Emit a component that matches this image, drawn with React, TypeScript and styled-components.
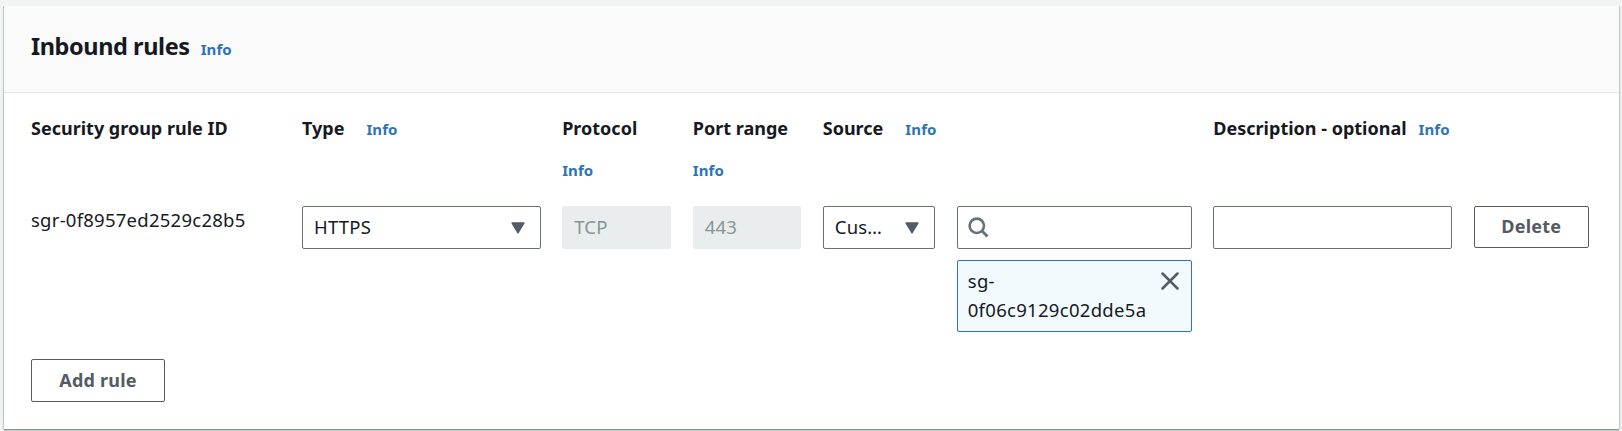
import React from "react";
import styled, { createGlobalStyle } from "styled-components";

const GlobalStyle = createGlobalStyle`
  * { box-sizing: border-box; }
  body {
    margin: 0;
    background: #f2f3f3;
    color: #16191f;
    font-family: "Noto Sans", "Open Sans", sans-serif;
    font-size: 18.5px;
    line-height: 29px;
  }
`;

const Page = styled.main`
  height: 431px;
  padding: 6px 3px 2px 4px;
  background: #f2f3f3;
`;

const Panel = styled.section`
  height: 423px;
  background: #fff;
  box-shadow: 0 1px 0 0 #879093, 0 2px 0 0 #c6cbcc, 1px 0 0 0 #c3c9c9, -1px 0 0 0 #c3c9c9,
    2px 1px 0 0 #e6e9e9, -2px 1px 0 0 #e9ebeb;
`;

const PanelHeader = styled.header`
  display: flex;
  align-items: baseline;
  gap: 11px;
  height: 87px;
  padding: 25px 27px 0;
  background: #fafafa;
  border-bottom: 1px solid #e6e9e9;
`;

const Title = styled.h2`
  margin: 0;
  font-size: 23.5px;
  line-height: 30px;
  font-weight: 700;
  letter-spacing: -0.42px;
`;

const InfoLink = styled.a`
  color: #2e73b8;
  font-size: 15px;
  font-weight: 700;
  letter-spacing: 0.1px;
`;

const PanelBody = styled.div`
  padding: 21px 27px 0;
`;

const columns = `
  display: grid;
  grid-template-columns: 249.4px 238.6px 109px 108.4px 112.4px 235px 238.8px 115px;
  column-gap: 21.6px;
`;

const HeadRow = styled.div`
  ${columns}
  height: 92px;
`;

const HeadCell = styled.div<{ $gap?: number; $stacked?: boolean; $span?: number }>`
  display: flex;
  flex-direction: ${(p) => (p.$stacked ? "column" : "row")};
  align-items: baseline;
  gap: ${(p) => (p.$stacked ? 13 : p.$gap ?? 0)}px;
  grid-column: span ${(p) => p.$span ?? 1};
  white-space: nowrap;
`;

const Label = styled.span`
  font-size: 18px;
  font-weight: 700;
`;

const RuleRow = styled.div`
  ${columns}
  align-items: start;
  height: 153px;
`;

const RuleId = styled.span`
  line-height: 27px;
  letter-spacing: 0.25px;
`;

const Field = styled.div<{ $disabled?: boolean }>`
  display: flex;
  align-items: center;
  justify-content: space-between;
  height: 43px;
  padding: 0 15px 0 11px;
  border: 1px solid ${(p) => (p.$disabled ? "#eaeded" : "#687078")};
  border-radius: 2px;
  background: ${(p) => (p.$disabled ? "#eaeded" : "#fff")};
  color: ${(p) => (p.$disabled ? "#879596" : "#16191f")};
  letter-spacing: 0.2px;
`;

const FieldText = styled.span`
  padding-bottom: 2px;
`;

const SearchField = styled(Field)`
  padding-left: 10px;
`;

const SourceStack = styled.div`
  display: flex;
  flex-direction: column;
  gap: 11px;
`;

const Token = styled.div`
  display: flex;
  justify-content: space-between;
  height: 72px;
  padding: 5px 12px 0 10px;
  border: 1px solid #2e73b8;
  border-radius: 2px;
  background: #f2fafe;
  line-height: 29px;
  letter-spacing: 0.3px;
`;

const CloseIcon = styled.svg`
  flex: none;
  margin-top: 6px;
`;

const Button = styled.button<{ $width: number; $height: number }>`
  width: ${(p) => p.$width}px;
  height: ${(p) => p.$height}px;
  padding: 0 0 1px;
  border: 1px solid #545b64;
  border-radius: 2px;
  background: #fff;
  color: #545b64;
  font: 700 18px/29px "Noto Sans", "Open Sans", sans-serif;
  letter-spacing: 0.2px;
`;

const Caret = () => (
  <svg width="14" height="12" viewBox="0 0 14 12">
    <path d="M1 1h12L7 11z" fill="#545b64" stroke="#545b64" strokeWidth="1.4" strokeLinejoin="round" />
  </svg>
);

const Search = () => (
  <svg width="21" height="21" viewBox="0 0 21 21" fill="none" stroke="#687078">
    <circle cx="8.8" cy="8.8" r="7.2" strokeWidth="2.6" />
    <path d="M13.8 13.8l5.7 5.7" strokeWidth="2.9" />
  </svg>
);

export default function App() {
  return (
    <Page>
      <GlobalStyle />
      <Panel>
        <PanelHeader>
          <Title>Inbound rules</Title>
          <InfoLink>Info</InfoLink>
        </PanelHeader>
        <PanelBody>
          <HeadRow>
            <HeadCell><Label>Security group rule ID</Label></HeadCell>
            <HeadCell $gap={22}><Label>Type</Label><InfoLink>Info</InfoLink></HeadCell>
            <HeadCell $stacked><Label>Protocol</Label><InfoLink>Info</InfoLink></HeadCell>
            <HeadCell $stacked><Label>Port range</Label><InfoLink>Info</InfoLink></HeadCell>
            <HeadCell $gap={22} $span={2}><Label>Source</Label><InfoLink>Info</InfoLink></HeadCell>
            <HeadCell $gap={12}><Label>Description - optional</Label><InfoLink>Info</InfoLink></HeadCell>
          </HeadRow>
          <RuleRow>
            <RuleId>sgr-0f8957ed2529c28b5</RuleId>
            <Field><FieldText>HTTPS</FieldText><Caret /></Field>
            <Field $disabled><FieldText>TCP</FieldText></Field>
            <Field $disabled><FieldText>443</FieldText></Field>
            <Field><FieldText>Cus…</FieldText><Caret /></Field>
            <SourceStack>
              <SearchField><Search /></SearchField>
              <Token>
                <span>sg-<br />0f06c9129c02dde5a</span>
                <CloseIcon width="18" height="18" viewBox="0 0 18 18">
                  <path d="M1.5 1.5l15 15M16.5 1.5l-15 15" stroke="#545b64" strokeWidth="2.5" strokeLinecap="round" />
                </CloseIcon>
              </Token>
            </SourceStack>
            <Field />
            <Button $width={115} $height={42}>Delete</Button>
          </RuleRow>
          <Button $width={134} $height={43}>Add rule</Button>
        </PanelBody>
      </Panel>
    </Page>
  );
}
